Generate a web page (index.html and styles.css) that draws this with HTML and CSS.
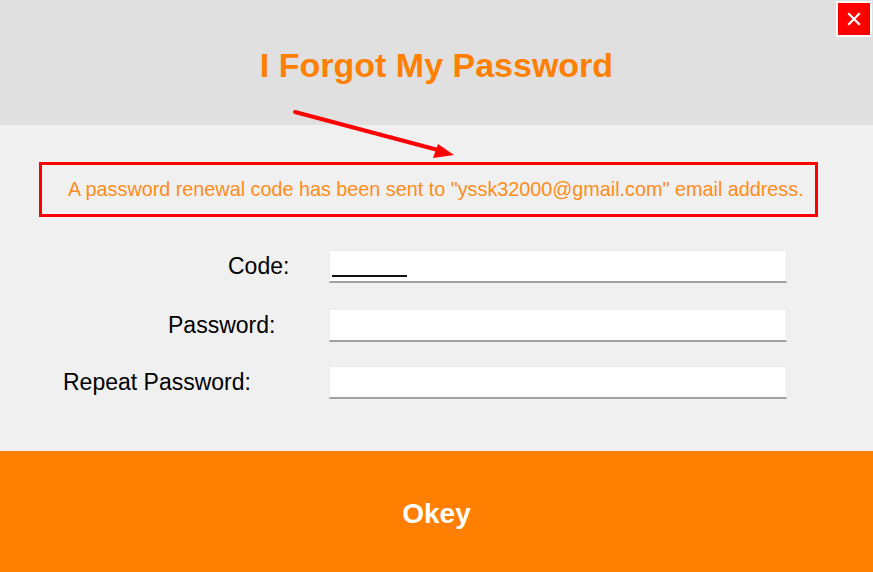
FILE: index.html
```html
<!DOCTYPE html>
<html>
<head>
<meta charset="utf-8">
<link rel="stylesheet" href="styles.css">
</head>
<body>
<div class="window">
  <header class="header">
    <h1 class="title">I Forgot My Password</h1>
    <button class="close" aria-label="Close">
      <svg width="14" height="14" viewBox="0 0 14 14"><path d="M2 2 L12 12 M12 2 L2 12" stroke="#fff" stroke-width="2.2" stroke-linecap="square"/></svg>
    </button>
  </header>
  <svg class="arrow" width="873" height="220" viewBox="0 0 873 220">
    <line x1="295" y1="112" x2="438" y2="150" stroke="#ff0000" stroke-width="4" stroke-linecap="round"/>
    <polygon points="454,155 433,158 438,144" fill="#ff0000"/>
  </svg>
  <main class="content">
    <div class="notice">A password renewal code has been sent to "yssk32000@gmail.com" email address.</div>
    <div class="form">
      <div class="row">
        <label class="label label-code">Code:</label>
        <div class="field"><span class="typed"></span></div>
      </div>
      <div class="row row-2">
        <label class="label label-pass">Password:</label>
        <div class="field"></div>
      </div>
      <div class="row row-3">
        <label class="label label-repeat">Repeat Password:</label>
        <div class="field"></div>
      </div>
    </div>
  </main>
  <footer class="footer">
    <button class="okey">Okey</button>
  </footer>
</div>
</body>
</html>
```
FILE: styles.css
```css
* { box-sizing: border-box; }
html, body { margin: 0; padding: 0; }
body {
  width: 873px;
  height: 572px;
  overflow: hidden;
  font-family: "Liberation Sans", Arial, sans-serif;
  background: #f0f0f0;
}
.window {
  position: relative;
  width: 873px;
  height: 572px;
  display: flex;
  flex-direction: column;
}
.header {
  height: 125px;
  background: #e0e0e0;
  display: flex;
  align-items: flex-start;
  justify-content: center;
  position: relative;
}
.title {
  margin: 0;
  padding-top: 45px;
  font-size: 34px;
  line-height: 40px;
  font-weight: bold;
  color: #ff8000;
  letter-spacing: 0;
}
.close {
  position: absolute;
  top: 1px;
  right: 1px;
  width: 36px;
  height: 36px;
  border: 2px solid #ffffff;
  background: #ff0000;
  padding: 0;
  display: flex;
  align-items: center;
  justify-content: center;
}
.arrow {
  position: absolute;
  left: 0;
  top: 0;
  pointer-events: none;
  z-index: 2;
}
.content {
  height: 326px;
  padding-top: 37px;
}
.notice {
  margin-left: 39px;
  width: 779px;
  height: 55px;
  border: 3px solid #ff0000;
  padding-left: 26px;
  font-size: 19.8px;
  line-height: 49px;
  color: #ff8c1a;
  white-space: nowrap;
}
.form {
  margin-top: 33px;
  display: flex;
  flex-direction: column;
  gap: 26px;
}
.row {
  display: grid;
  grid-template-columns: 329px 458px;
  align-items: center;
  height: 33px;
}
.row-3 { margin-top: -2px; }
.label {
  font-size: 23px;
  color: #000;
  line-height: 33px;
  padding-top: 0;
}
.label-code { padding-left: 228px; }
.label-pass { padding-left: 168px; }
.label-repeat { padding-left: 63px; }
.field {
  height: 33px;
  background: #ffffff;
  border: 1px solid #ebebeb;
  border-bottom: 2px solid #a0a0a0;
  position: relative;
}
.typed {
  position: absolute;
  left: 2px;
  bottom: 4px;
  width: 75px;
  height: 2px;
  background: #111;
}
.footer {
  flex: 1;
  background: #ff8000;
  display: flex;
  align-items: center;
  justify-content: center;
}
.okey {
  background: none;
  border: 0;
  padding: 0;
  margin-top: 4px;
  font-family: "Liberation Sans", Arial, sans-serif;
  font-size: 28px;
  font-weight: bold;
  color: #ffffff;
}
```
